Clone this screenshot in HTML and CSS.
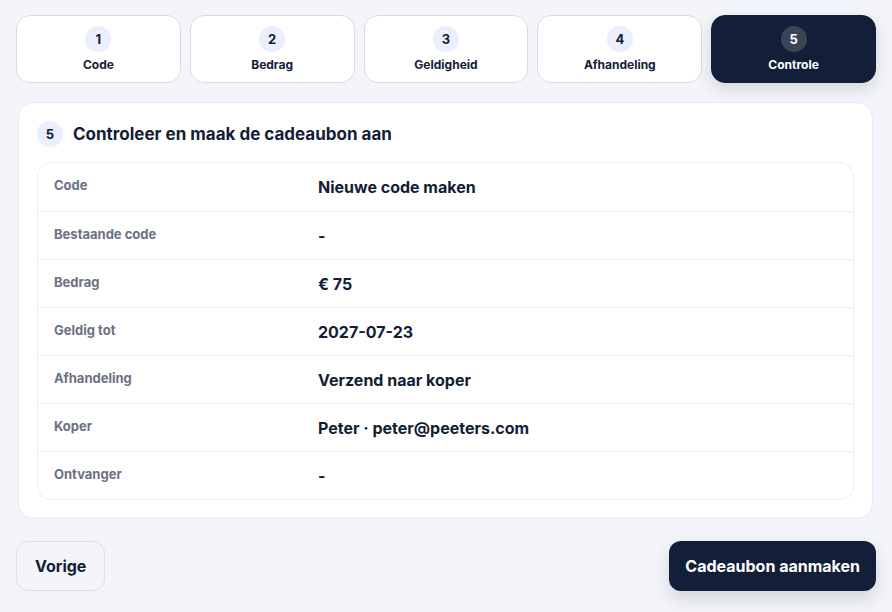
FILE: index.html
```html
<!DOCTYPE html>
<html lang="nl">
<head>
    <meta charset="UTF-8">
    <meta name="viewport" content="width=device-width, initial-scale=1.0">
    <title>Cadeaubon aanmaken</title>
    <link rel="stylesheet" href="styles.css">
</head>
<body>
    <div class="wizard">
        <!-- Steps -->
        <div class="steps">
            <div class="step"><span class="step-num">1</span><span class="step-label">Code</span></div>
            <div class="step"><span class="step-num">2</span><span class="step-label">Bedrag</span></div>
            <div class="step"><span class="step-num">3</span><span class="step-label">Geldigheid</span></div>
            <div class="step"><span class="step-num">4</span><span class="step-label">Afhandeling</span></div>
            <div class="step active"><span class="step-num">5</span><span class="step-label">Controle</span></div>
        </div>

        <div class="panel">
            <div class="panel-title">
                <span class="step-num">5</span>
                <h2>Controleer en maak de cadeaubon aan</h2>
            </div>
            <div class="summary">
                <div class="row"><div class="label">Code</div><div class="value">Nieuwe code maken</div></div>
                <div class="row"><div class="label">Bestaande code</div><div class="value">-</div></div>
                <div class="row"><div class="label">Bedrag</div><div class="value">€ 75</div></div>
                <div class="row"><div class="label">Geldig tot</div><div class="value">2027-07-23</div></div>
                <div class="row"><div class="label">Afhandeling</div><div class="value">Verzend naar koper</div></div>
                <div class="row"><div class="label">Koper</div><div class="value">Peter · peter@peeters.com</div></div>
                <div class="row"><div class="label">Ontvanger</div><div class="value">-</div></div>
            </div>
        </div>

        <div class="actions">
            <button class="btn btn-secondary">Vorige</button>
            <button class="btn btn-primary">Cadeaubon aanmaken</button>
        </div>
    </div>
</body>
</html>
```

FILE: styles.css
```css
body {
    margin: 0;
    background-color: #f4f5fa;
    font-family: Inter, "Liberation Sans", Arial, sans-serif;
    color: #131d35;
}
.wizard {
    padding: 15px 16px 20px 16px;
}
.steps {
    display: grid;
    grid-template-columns: repeat(5, 1fr);
    gap: 9px;
}
.step {
    height: 68px;
    box-sizing: border-box;
    background: #ffffff;
    border: 1px solid #d9dbe3;
    border-radius: 14px;
    display: flex;
    flex-direction: column;
    align-items: center;
    justify-content: center;
    gap: 5px;
}
.step-num {
    width: 26px;
    height: 26px;
    border-radius: 50%;
    background: #ebeefc;
    display: flex;
    align-items: center;
    justify-content: center;
    font-size: 13px;
    font-weight: 700;
    color: #131d35;
}
.step-label {
    font-size: 12px;
    font-weight: 700;
}
.step.active {
    background: #131f38;
    border-color: #131f38;
    color: #ffffff;
    box-shadow: 0 6px 16px rgba(19, 31, 56, 0.15);
}
.step.active .step-num {
    background: #3b4457;
    color: #ffffff;
}
.panel {
    margin: 19px 3px 0 2px;
    background: #ffffff;
    border: 1px solid #e8eaf0;
    border-radius: 16px;
    padding: 18px 18px 18px 18px;
}
.panel-title {
    display: flex;
    align-items: center;
    gap: 10px;
}
.panel-title h2 {
    margin: 0;
    font-size: 17px;
    font-weight: 700;
}
.summary {
    margin-top: 15px;
    border: 1px solid #eceef2;
    border-radius: 14px;
}
.row {
    display: grid;
    grid-template-columns: 264px 1fr;
    height: 48px;
    box-sizing: border-box;
    border-top: 1px solid #eceef2;
}
.row:first-child {
    border-top: none;
}
.label {
    padding: 14px 16px 0 16px;
    font-size: 13px;
    font-weight: 700;
    color: #6b7183;
}
.value {
    padding: 14px 16px 0 16px;
    font-size: 16px;
    font-weight: 700;
}
.actions {
    display: flex;
    justify-content: space-between;
    margin-top: 22px;
}
.btn {
    height: 50px;
    border-radius: 12px;
    font-family: inherit;
    font-size: 16px;
    font-weight: 700;
    padding: 0 18px;
}
.btn-secondary {
    background: #f4f5fa;
    border: 1px solid #dcdfe8;
    color: #131d35;
}
.btn-primary {
    padding: 0 16px;
    background: #131f38;
    border: none;
    color: #ffffff;
    box-shadow: 0 8px 18px rgba(19, 31, 56, 0.15);
}
```
